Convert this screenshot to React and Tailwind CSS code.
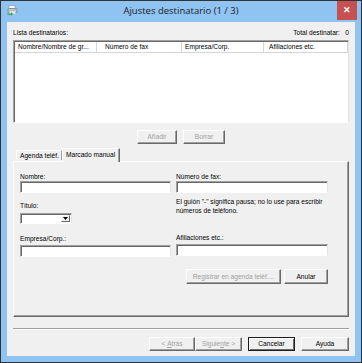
import React from "react";

const btnBase =
  "h-full flex items-center justify-center bg-[#f0f0f0] border border-t-white border-l-white border-r-[#696969] border-b-[#696969] shadow-[inset_-1px_-1px_0_#a0a0a0]";

function Btn({ children, w, disabled, def }) {
  return (
    <div
      className={
        (def
          ? "h-full flex items-center justify-center bg-[#f0f0f0] border border-[#1e1e1e] shadow-[inset_1px_1px_0_#ffffff,inset_-1px_-1px_0_#696969] "
          : btnBase + " ") +
        w +
        (disabled ? " text-[#a0a0a0]" : " text-black")
      }
    >
      {children}
    </div>
  );
}

const sunken =
  "bg-white border border-t-[#a0a0a0] border-l-[#a0a0a0] border-b-white border-r-[#e3e3e3] shadow-[inset_1px_1px_0_#696969]";

export default function App() {
  return (
    <div className="w-[362px] h-[363px] bg-[#8ec3f2] border border-[#333333] flex flex-col font-['Liberation_Sans',sans-serif] text-[6.6px] leading-[8px] text-black overflow-hidden">
      {/* Title bar */}
      <div className="h-[21px] grid grid-cols-[1fr_auto_1fr] items-start shrink-0">
        <div className="pl-[6px] pt-[4px]">
          <svg width="11" height="11" viewBox="0 0 11 11">
            <rect x="2" y="0.5" width="6" height="3" fill="#ffffff" stroke="#9aa3ab" strokeWidth="0.8" />
            <rect x="1" y="3.5" width="9" height="4" rx="0.5" fill="#b9c1c8" stroke="#7d868e" strokeWidth="0.8" />
            <rect x="2.5" y="6.5" width="6" height="2" fill="#e9edf0" />
            <path d="M0.5 8.5 L4 8.5 L4 7 L6 9 L4 11 L4 9.8 L0.5 9.8 Z" fill="#3aa640" />
          </svg>
        </div>
        <div className="pt-[4px] text-[9.5px] leading-[12px] font-['Open_Sans',sans-serif] text-[#222222] text-center whitespace-nowrap">
          Ajustes destinatario (1 / 3)
        </div>
        <div className="flex justify-end pr-[4px]">
          <div className="w-[20px] h-[19px] bg-[#c75050] flex items-center justify-center text-white text-[9px] font-bold leading-none">
            ✕
          </div>
        </div>
      </div>

      {/* Content */}
      <div className="mx-[6px] h-[334px] bg-[#f0f0f0] px-[6px] flex flex-col shrink-0">
        <div className="h-[18px] pt-[7px] flex justify-between whitespace-nowrap">
          <span>Lista destinatarios:</span>
          <span>Total destinatar:&nbsp;&nbsp;&nbsp;0</span>
        </div>

        {/* List */}
        <div className={"h-[83px] " + sunken}>
          <div className="flex h-[12px] pl-[1px] pt-[1px]">
            <div className="w-[82px] border-r border-b border-[#d5d5d5] pl-[3px] flex items-center whitespace-nowrap">
              Nombre/Nombre de gr...
            </div>
            <div className="w-[85px] border-r border-b border-[#d5d5d5] pl-[8px] flex items-center whitespace-nowrap">
              Número de fax
            </div>
            <div className="w-[82px] border-r border-b border-[#d5d5d5] pl-[3px] flex items-center whitespace-nowrap">
              Empresa/Corp.
            </div>
            <div className="w-[84px] border-r border-b border-[#d5d5d5] pl-[5px] flex items-center whitespace-nowrap">
              Afiliaciones etc.
            </div>
          </div>
        </div>

        {/* Add / Remove */}
        <div className="mt-[7px] h-[14px] flex justify-center gap-[6px]">
          <Btn w="w-[40px]" disabled>Añadir</Btn>
          <Btn w="w-[42px]" disabled>Borrar</Btn>
        </div>

        {/* Tabs */}
        <div className="mt-[3px] h-[14px] flex items-end pl-[3px] relative z-10">
          <div className="h-[10px] w-[46px] flex items-center pl-[3px] border-t border-l border-white border-r border-r-[#a0a0a0] whitespace-nowrap mb-[1px]">
            Agenda teléf.
          </div>
          <div className="h-[14px] w-[58px] bg-[#f0f0f0] border-t border-l border-white border-r border-r-[#696969] shadow-[inset_-1px_0_0_#a0a0a0] flex items-start pt-[2px] pl-[3px] whitespace-nowrap -mb-px">
            Marcado manual
          </div>
        </div>

        {/* Panel */}
        <div className="h-[156px] border border-t-white border-l-white border-r-[#696969] border-b-[#696969] shadow-[inset_-1px_-1px_0_#a0a0a0] pl-[6px] pr-[20px] pt-[11px] flex gap-[5px]">
          <div className="w-[151px] flex flex-col">
            <div className="h-[8px]">Nombre:</div>
            <div className={"h-[12px] " + sunken}></div>
            <div className="h-[8px] mt-[9px]">Título:</div>
            <div className={"mt-[3px] h-[11px] w-[52px] flex justify-end items-stretch p-[1px] " + sunken}>
              <div className="w-[9px] bg-[#f0f0f0] border border-t-white border-l-white border-r-[#696969] border-b-[#696969] flex items-center justify-center">
                <svg width="5" height="3" viewBox="0 0 5 3">
                  <path d="M0 0 H5 L2.5 3 Z" fill="#000" />
                </svg>
              </div>
            </div>
            <div className="h-[8px] mt-[11px]">Empresa/Corp.:</div>
            <div className={"mt-[2px] h-[12px] " + sunken}></div>
          </div>
          <div className="w-[152px] flex flex-col">
            <div className="h-[8px]">Número de fax:</div>
            <div className={"h-[12px] " + sunken}></div>
            <div className="mt-[4px] leading-[9px] whitespace-nowrap">
              El guión "-" significa pausa; no lo use para escribir
              <br />
              números de teléfono.
            </div>
            <div className="h-[8px] mt-[19px]">Afiliaciones etc.:</div>
            <div className={"mt-[2px] h-[12px] " + sunken}></div>
            <div className="mt-[13px] h-[15px] flex justify-end gap-[3px]">
              <Btn w="w-[95px]" disabled>Registrar en agenda teléf....</Btn>
              <Btn w="w-[44px]">Anular</Btn>
            </div>
          </div>
        </div>

        {/* Separator */}
        <div className="mt-[11px] h-[2px] border-t border-[#a0a0a0] border-b border-b-white"></div>

        {/* Bottom buttons */}
        <div className="mt-[7px] h-[14px] flex justify-end">
          <Btn w="w-[46px]" disabled>
            &lt;&nbsp;<span className="underline">A</span>trás
          </Btn>
          <Btn w="w-[47px]" disabled>
            Siguie<span className="underline">n</span>te &gt;
          </Btn>
          <div className="w-[6px]"></div>
          <Btn w="w-[47px]" def>Cancelar</Btn>
          <div className="w-[6px]"></div>
          <Btn w="w-[48px]">Ayuda</Btn>
        </div>
      </div>
    </div>
  );
}
